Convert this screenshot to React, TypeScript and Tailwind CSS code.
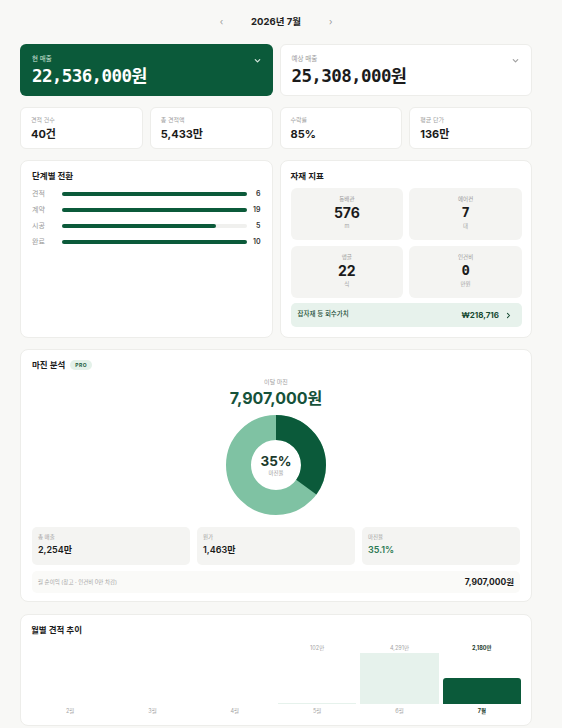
import React from "react";

const sans = { fontFamily: "Inter, 'Noto Sans CJK KR', sans-serif" };
const mono = { fontFamily: "'DejaVu Sans Mono', 'Noto Sans CJK KR', monospace" };

function Chevron({ className = "" }: { className?: string }) {
  return (
    <svg viewBox="0 0 10 10" className={className} fill="none" stroke="currentColor" strokeWidth="1.3" strokeLinecap="round" strokeLinejoin="round">
      <path d="M2.5 4l2.5 2.5L7.5 4" />
    </svg>
  );
}

const stages = [
  { label: "견적", value: 6, pct: 100 },
  { label: "계약", value: 19, pct: 100 },
  { label: "시공", value: 5, pct: 83 },
  { label: "완료", value: 10, pct: 100 },
];

const materials = [
  { label: "동배관", value: "576", unit: "m", mono: false },
  { label: "에어컨", value: "7", unit: "대", mono: true },
  { label: "앵글", value: "22", unit: "식", mono: false },
  { label: "인건비", value: "0", unit: "만원", mono: true },
];

const months = [
  { m: "2월", v: 0, label: "" },
  { m: "3월", v: 0, label: "" },
  { m: "4월", v: 0, label: "" },
  { m: "5월", v: 102, label: "102만" },
  { m: "6월", v: 4291, label: "4,291만" },
  { m: "7월", v: 2180, label: "2,180만", current: true },
];

function Donut() {
  const r = 37.5;
  const c = 2 * Math.PI * r;
  const share = 0.35;
  return (
    <svg width="100" height="100" viewBox="0 0 100 100">
      <circle cx="50" cy="50" r={r} fill="none" stroke="#7fc2a3" strokeWidth="25" />
      <circle
        cx="50"
        cy="50"
        r={r}
        fill="none"
        stroke="#0b5a3a"
        strokeWidth="25"
        strokeDasharray={`${c * share} ${c}`}
        transform="rotate(-90 50 50)"
      />
    </svg>
  );
}

export default function App() {
  const max = 4291;
  return (
    <div className="min-h-screen w-[562px] bg-[#f8f8f6] pl-[20px] pr-[30px] text-[#1b1b1b]" style={sans}>
      {/* month switcher */}
      <div className="flex h-[44px] items-center justify-center gap-[28px]">
        <span className="text-[9px] text-[#9a9a9a]">‹</span>
        <span className="text-[9.5px] font-bold text-[#222]">2026년 7월</span>
        <span className="text-[9px] text-[#9a9a9a]">›</span>
      </div>

      {/* revenue */}
      <div className="grid grid-cols-2 gap-[7px]">
        <div className="relative h-[52px] rounded-[6px] bg-[#0b5a3a] px-[12px] pt-[10px] text-white">
          <div className="text-[6.5px] leading-[10px] text-[#cfe3d8]">현 매출</div>
          <div className="mt-[1px] text-[17.5px] font-bold leading-[22px] tracking-[-0.6px]" style={mono}>22,536,000원</div>
          <Chevron className="absolute right-[11px] top-[12px] h-[9px] w-[9px] text-[#d8e8df]" />
        </div>
        <div className="relative h-[52px] rounded-[6px] border border-[#ededea] bg-white px-[11px] pt-[9px]">
          <div className="text-[6.5px] leading-[10px] text-[#9a9a9a]">예상 매출</div>
          <div className="mt-[1px] text-[17.5px] font-bold leading-[22px] tracking-[-0.6px] text-[#1b1b1b]" style={mono}>25,308,000원</div>
          <Chevron className="absolute right-[11px] top-[11px] h-[9px] w-[9px] text-[#a0a0a0]" />
        </div>
      </div>

      {/* stats */}
      <div className="mt-[11px] grid grid-cols-4 gap-[7px]">
        {[
          ["견적 건수", "40건"],
          ["총 견적액", "5,433만"],
          ["수락률", "85%"],
          ["평균 단가", "136만"],
        ].map(([k, v]) => (
          <div key={k} className="h-[42px] rounded-[6px] border border-[#ededea] bg-white px-[10px] pt-[7px]">
            <div className="text-[6px] leading-[9px] text-[#a0a0a0]">{k}</div>
            <div className="mt-[3px] text-[11px] font-bold leading-[14px] text-[#1b1b1b]">{v}</div>
          </div>
        ))}
      </div>

      {/* stages + materials */}
      <div className="mt-[11px] grid grid-cols-2 gap-[7px]">
        <div className="h-[178px] rounded-[8px] border border-[#ededea] bg-white px-[11px] pt-[9px]">
          <div className="text-[8.5px] font-bold leading-[12px] text-[#1b1b1b]">단계별 전환</div>
          <div className="mt-[4px] flex flex-col">
            {stages.map((s) => (
              <div key={s.label} className="flex h-[16px] items-center">
                <span className="w-[30px] text-[7px] text-[#9a9a9a]">{s.label}</span>
                <div className="h-[4px] w-[185px] rounded-full bg-[#f0f0ee]">
                  <div className="h-full rounded-full bg-[#0b5a3a]" style={{ width: `${s.pct}%` }} />
                </div>
                <span className="flex-1 text-right text-[7px] font-semibold text-[#333]">{s.value}</span>
              </div>
            ))}
          </div>
        </div>

        <div className="h-[178px] rounded-[8px] border border-[#ededea] bg-white pl-[10px] pr-[9px] pt-[9px]">
          <div className="text-[8.5px] font-bold leading-[12px] text-[#1b1b1b]">자재 지표</div>
          <div className="mt-[6px] grid grid-cols-2 gap-[6px]">
            {materials.map((m) => (
              <div key={m.label} className="flex h-[52px] flex-col items-center rounded-[6px] bg-[#f4f4f2] pt-[7px]">
                <span className="text-[5.5px] leading-[8px] text-[#9a9a9a]">{m.label}</span>
                <span className="mt-[1px] text-[14px] font-bold leading-[17px] text-[#1b1b1b]" style={m.mono ? mono : undefined}>{m.value}</span>
                <span className="mt-[1px] text-[5.5px] leading-[8px] text-[#a5a5a5]">{m.unit}</span>
              </div>
            ))}
          </div>
          <div className="mt-[5px] flex h-[24px] items-center justify-between rounded-[5px] bg-[#e7f2ec] pl-[7px] pr-[10px]">
            <span className="text-[6.5px] font-medium text-[#1d4f38]">잡자재 등 회수가치</span>
            <span className="flex items-center gap-[6px] text-[8px] font-bold text-[#174a33]">
              ₩218,716
              <svg viewBox="0 0 10 10" className="h-[7px] w-[7px]" fill="none" stroke="currentColor" strokeWidth="1.5" strokeLinecap="round" strokeLinejoin="round">
                <path d="M3.5 2l3 3-3 3" />
              </svg>
            </span>
          </div>
        </div>
      </div>

      {/* margin */}
      <div className="mt-[11px] h-[253px] rounded-[8px] border border-[#ededea] bg-white px-[11px] pt-[9px]">
        <div className="flex items-center gap-[5px]">
          <span className="text-[8.5px] font-bold leading-[12px] text-[#1b1b1b]">마진 분석</span>
          <span className="rounded-full bg-[#e4f1e9] px-[5px] text-[5px] font-bold leading-[10px] tracking-[0.5px] text-[#1d5a3c]">PRO</span>
        </div>
        <div className="mt-[6px] flex flex-col items-center">
          <span className="text-[6px] leading-[9px] text-[#a0a0a0]">이달 마진</span>
          <span className="mt-[1px] text-[16px] font-bold leading-[22px] text-[#16523a]">7,907,000원</span>
          <div className="relative mt-[6px] h-[100px] w-[100px]">
            <Donut />
            <div className="absolute inset-0 flex flex-col items-center justify-center">
              <span className="text-[13.5px] font-bold leading-[16px] text-[#1c3a2c]">35%</span>
              <span className="text-[5.5px] leading-[8px] text-[#9a9a9a]">마진율</span>
            </div>
          </div>
        </div>
        <div className="mt-[12px] grid grid-cols-3 gap-[7px]">
          {[
            ["총 매출", "2,254만", "text-[#1b1b1b]"],
            ["원가", "1,463만", "text-[#1b1b1b]"],
            ["마진율", "35.1%", "text-[#2c7a55]"],
          ].map(([k, v, c]) => (
            <div key={k} className="h-[38px] rounded-[5px] bg-[#f4f4f2] px-[6px] pt-[6px]">
              <div className="text-[5.5px] leading-[8px] text-[#a0a0a0]">{k}</div>
              <div className={`mt-[3px] text-[9px] font-semibold leading-[12px] ${c}`}>{v}</div>
            </div>
          ))}
        </div>
        <div className="mt-[6px] flex h-[22px] items-center justify-between rounded-[5px] bg-[#fafaf8] pl-[6px] pr-[6px]">
          <span className="text-[5.5px] text-[#a5a5a5]">월 순이익 (창고 · 인건비 0만 차감)</span>
          <span className="text-[8.5px] font-bold text-[#1b1b1b]">7,907,000원</span>
        </div>
      </div>

      {/* monthly trend */}
      <div className="mt-[12px] h-[112px] rounded-[8px] border border-[#ededea] bg-white px-[10px] pt-[9px]">
        <div className="text-[8.5px] font-bold leading-[12px] text-[#1b1b1b]">월별 견적 추이</div>
        <div className="mt-[7px] grid grid-cols-6 gap-[4px]">
          {months.map((mo) => {
            const h = mo.v > 0 ? Math.max(1.5, (mo.v / max) * 51) : 0;
            return (
              <div key={mo.m} className="flex flex-col items-center">
                <span className={`h-[10px] text-[5.5px] leading-[10px] ${mo.current ? "font-bold text-[#1b3a2b]" : "text-[#a5a5a5]"}`}>{mo.label}</span>
                <div className="flex h-[51px] w-full items-end">
                  {h > 0 && (
                    <div
                      className={`w-full ${mo.current ? "rounded-t-[3px] bg-[#0b5a3a]" : "bg-[#e6f2ec]"}`}
                      style={{ height: `${h}px` }}
                    />
                  )}
                </div>
                <span className={`mt-[2px] text-[5.5px] leading-[10px] ${mo.current ? "font-bold text-[#1b3a2b]" : "text-[#a5a5a5]"}`}>{mo.m}</span>
              </div>
            );
          })}
        </div>
      </div>
    </div>
  );
}
